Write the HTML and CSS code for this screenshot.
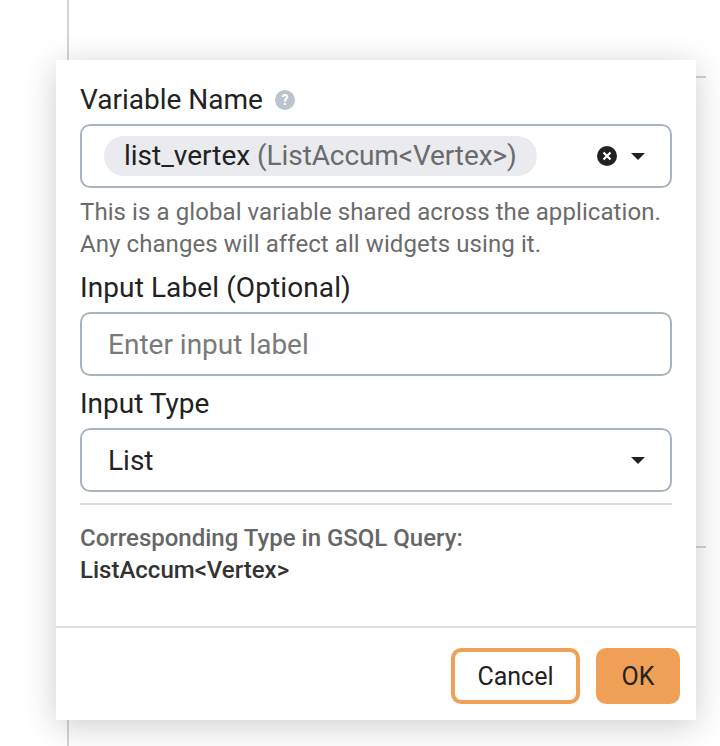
FILE: index.html
```html
<!DOCTYPE html>
<html lang="en">
<head>
<meta charset="UTF-8">
<title>Variable settings</title>
<link rel="stylesheet" href="styles.css">
</head>
<body>
<div class="backdrop">
    <span class="line line-left"></span>
    <span class="line line-top"></span>
    <span class="line line-mid"></span>
</div>

<div class="dialog">
    <div class="dialog-body">
        <div class="label-row">
            <label class="field-label">Variable Name</label>
            <svg class="help" width="20" height="20" viewBox="0 0 20 20">
                <circle cx="10" cy="10" r="10" fill="#bcc3cf"/>
                <text x="10" y="15" text-anchor="middle" class="help-mark">?</text>
            </svg>
        </div>
        <div class="select select-multi">
            <span class="tag">list_vertex <span class="tag-type">(ListAccum&lt;Vertex&gt;)</span></span>
            <svg class="clear" width="20" height="20" viewBox="0 0 20 20">
                <circle cx="10" cy="10" r="10" fill="#222"/>
                <path d="M6.5 6.5l7 7M13.5 6.5l-7 7" stroke="#fff" stroke-width="2.2"/>
            </svg>
            <span class="caret"></span>
        </div>
        <p class="hint">This is a global variable shared across the application.<br>Any changes will affect all widgets using it.</p>

        <label class="field-label label-second">Input Label (Optional)</label>
        <input class="text-input" type="text" placeholder="Enter input label">

        <label class="field-label label-third">Input Type</label>
        <div class="select">
            <span class="select-value">List</span>
            <span class="caret"></span>
        </div>

        <div class="type-info">
            <div class="type-caption">Corresponding Type in GSQL Query:</div>
            <div class="type-name">ListAccum&lt;Vertex&gt;</div>
        </div>
    </div>
    <div class="dialog-footer">
        <button class="btn btn-cancel">Cancel</button>
        <button class="btn btn-ok">OK</button>
    </div>
</div>
</body>
</html>
```
FILE: styles.css
```css
html, body {
    height: 100%;
}
body {
    margin: 0;
    background: #fff;
    font-family: Roboto, "Liberation Sans", sans-serif;
    color: #222;
    overflow: hidden;
    position: relative;
}
.line {
    position: absolute;
    background: #d0d3d9;
}
.line-left {
    left: 67px;
    top: 0;
    width: 2px;
    height: 746px;
}
.line-top {
    left: 696px;
    top: 76px;
    width: 10px;
    height: 2px;
}
.line-mid {
    left: 696px;
    top: 546px;
    width: 10px;
    height: 2px;
}
.dialog {
    position: absolute;
    left: 56px;
    top: 60px;
    width: 640px;
    height: 660px;
    background: #fff;
    box-shadow: 0 6px 32px rgba(0, 0, 0, 0.2);
    display: flex;
    flex-direction: column;
}
.dialog-body {
    flex: 1;
    padding: 24px 24px 0;
    display: flex;
    flex-direction: column;
}
.label-row {
    display: flex;
    align-items: center;
    gap: 12px;
    height: 32px;
}
.field-label {
    font-size: 28px;
    line-height: 32px;
    color: #222;
}
.select {
    height: 64px;
    box-sizing: border-box;
    border: 2px solid #aab4c0;
    border-radius: 10px;
    display: flex;
    align-items: center;
    padding: 0 25px 0 26px;
    margin-top: 8px;
    font-size: 28px;
}
.select-multi {
    padding-left: 22px;
}
.tag {
    background: #e9ebef;
    border-radius: 20px;
    height: 40px;
    line-height: 40px;
    padding: 0 20px;
}
.tag-type {
    color: #6b6b6b;
    letter-spacing: -0.1px;
}
.clear {
    margin-left: auto;
}
.caret {
    width: 0;
    height: 0;
    border-left: 7px solid transparent;
    border-right: 7px solid transparent;
    border-top: 7px solid #222;
    margin-left: 14px;
}
.select-value {
    flex: 1;
}
.hint {
    margin: 8px 0 0;
    font-size: 24px;
    line-height: 32px;
    letter-spacing: 0.08px;
    color: #6b6b6b;
}
.label-second {
    margin-top: 12px;
    letter-spacing: 0.1px;
}
.label-third {
    margin-top: 12px;
}
.text-input {
    height: 64px;
    box-sizing: border-box;
    border: 2px solid #aab4c0;
    border-radius: 10px;
    padding: 0 26px;
    margin-top: 8px;
    font: 28px Roboto, "Liberation Sans", sans-serif;
    outline: none;
}
.text-input::placeholder {
    color: #7a7a7a;
}
.type-info {
    margin-top: 11px;
    padding-top: 17px;
    border-top: 2px solid #dedede;
    font-size: 24px;
    line-height: 32px;
}
.type-caption {
    color: #666;
    font-weight: 500;
}
.type-name {
    font-weight: 500;
    color: #333;
}
.dialog-footer {
    border-top: 2px solid #dedede;
    display: flex;
    justify-content: flex-end;
    gap: 16px;
    padding: 20px 16px 16px;
}
.btn {
    height: 56px;
    border-radius: 10px;
    font: 25px Roboto, "Liberation Sans", sans-serif;
    color: #222;
    padding: 0;
}
.btn-cancel {
    width: 129px;
    background: #fff;
    border: 4px solid #ef9f56;
}
.btn-ok {
    width: 84px;
    background: #ef9f56;
    border: none;
}
.help-mark {
    font: bold 14px Roboto, sans-serif;
    fill: #fff;
}
```
